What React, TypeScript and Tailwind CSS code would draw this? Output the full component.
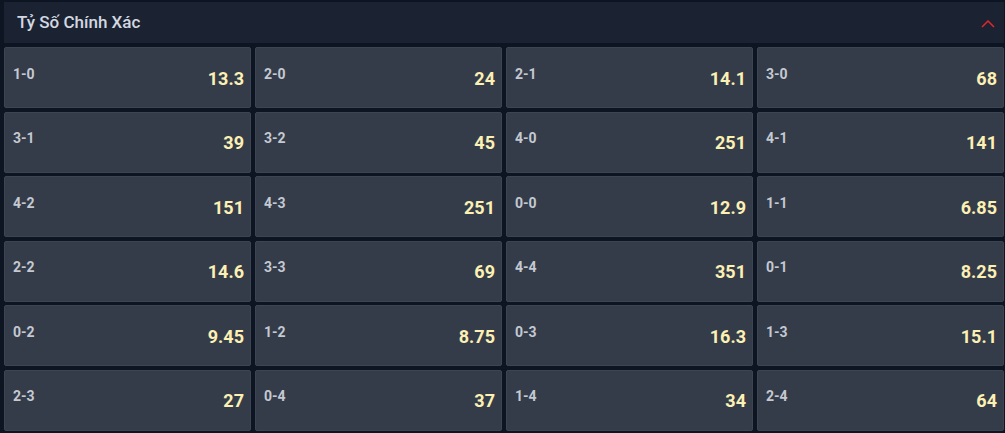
import React from "react";

const data: [string, string][] = [
  ["1-0", "13.3"], ["2-0", "24"], ["2-1", "14.1"], ["3-0", "68"],
  ["3-1", "39"], ["3-2", "45"], ["4-0", "251"], ["4-1", "141"],
  ["4-2", "151"], ["4-3", "251"], ["0-0", "12.9"], ["1-1", "6.85"],
  ["2-2", "14.6"], ["3-3", "69"], ["4-4", "351"], ["0-1", "8.25"],
  ["0-2", "9.45"], ["1-2", "8.75"], ["0-3", "16.3"], ["1-3", "15.1"],
  ["2-3", "27"], ["0-4", "37"], ["1-4", "34"], ["2-4", "64"],
];

export default function App() {
  return (
    <div
      className="w-[1005px] h-[433px] bg-[#0e1522] pl-[4px] pr-[1px] pt-[2px] overflow-hidden"
      style={{ fontFamily: "Roboto, 'Liberation Sans', sans-serif" }}
    >
      <div className="h-[41px] bg-[#1b2333] flex items-center justify-between pl-[13px] pr-[8px]">
        <span className="text-[17px] text-[#d3d8e0] font-medium">Tỷ Số Chính Xác</span>
        <svg width="16" height="10" viewBox="0 0 16 10" className="mt-[3px]">
          <path d="M2 8 L8 2 L14 8" fill="none" stroke="#e5262b" strokeWidth="1.5" />
        </svg>
      </div>
      <div className="mt-[4px] grid grid-cols-[247px_247px_247px_247px] gap-x-[4px] gap-y-[3.6px]">
        {data.map(([k, v]) => (
          <div
            key={k}
            className="h-[61px] bg-[#343c49] border border-[#3d4553] rounded-[2px] flex items-center justify-between pl-[8px] pr-[6px]"
          >
            <span className="text-[14px] font-bold text-[#c4c9d2] mb-[7px]">{k}</span>
            <span className="text-[18px] font-bold text-[#fdf0b4] mt-[1px]">{v}</span>
          </div>
        ))}
      </div>
    </div>
  );
}
